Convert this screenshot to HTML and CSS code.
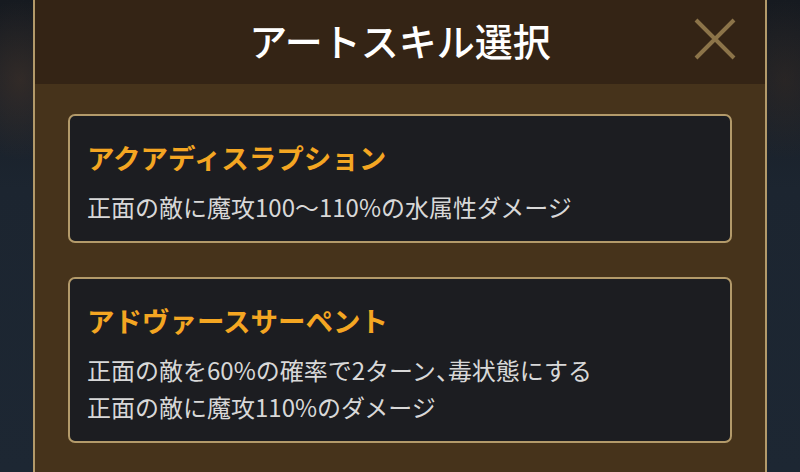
FILE: index.html
```html
<!DOCTYPE html>
<html lang="ja">
<head>
<meta charset="utf-8">
<link rel="stylesheet" href="styles.css">
</head>
<body>
<div class="backdrop">
  <div class="modal">
    <div class="header">
      <h1 class="title">アートスキル選択</h1>
      <button class="close" aria-label="閉じる">
        <svg width="44" height="44" viewBox="0 0 44 44"><path d="M3 3 L41 41 M41 3 L3 41" stroke="#8c7449" stroke-width="4" stroke-linecap="butt" fill="none"/></svg>
      </button>
    </div>
    <div class="body">
      <div class="card">
        <div class="card-title">アクアディスラプション</div>
        <div class="card-desc">正面の敵に魔攻100〜110%の水属性ダメージ</div>
      </div>
      <div class="card">
        <div class="card-title">アドヴァースサーペント</div>
        <div class="card-desc">正面の敵を60%の確率で2ターン<span class="punct">、</span>毒状態にする<br>正面の敵に魔攻110%のダメージ</div>
      </div>
    </div>
  </div>
</div>
</body>
</html>
```

FILE: styles.css
```css
* { box-sizing: border-box; }
html, body { margin: 0; padding: 0; }
body {
  width: 800px;
  height: 472px;
  overflow: hidden;
  font-family: "Noto Sans CJK JP", "Noto Sans", sans-serif;
  background: #1b222c;
}
.backdrop {
  height: 472px;
  padding: 0 33px;
  background:
    radial-gradient(ellipse 60px 80px at 20px 80px, rgba(70,52,40,0.55), rgba(0,0,0,0)),
    radial-gradient(ellipse 60px 80px at 785px 80px, rgba(60,45,35,0.45), rgba(0,0,0,0)),
    linear-gradient(180deg, #161a20 0%, #1c2530 40%, #1d2733 100%);
}
.modal {
  height: 100%;
  border-left: 2px solid #b39a6a;
  border-right: 2px solid #b39a6a;
  background: #46331b;
  display: flex;
  flex-direction: column;
}
.header {
  height: 84px;
  background: #342415;
  display: flex;
  align-items: center;
  justify-content: center;
  position: relative;
}
.title {
  margin: 0;
  color: #ffffff;
  font-size: 38px;
  font-weight: 500;
  line-height: 1;
  padding-bottom: 4px;
}
.close {
  position: absolute;
  right: 28px;
  top: 17px;
  width: 44px;
  height: 44px;
  padding: 0;
  border: 0;
  background: transparent;
  display: flex;
}
.body {
  padding: 30px 33px 0;
  display: flex;
  flex-direction: column;
  gap: 34px;
}
.card {
  background: #1c1d21;
  border: 2px solid #b39a6a;
  border-radius: 7px;
  padding: 22px 17px 16px;
  display: flex;
  flex-direction: column;
  gap: 12px;
}
.card-title {
  color: #f4a622;
  font-size: 27.5px;
  font-weight: 700;
  line-height: 38px;
}
.card-desc {
  color: #d8d8d8;
  font-size: 24px;
  font-weight: 400;
  line-height: 37px;
}
.punct {
  font-feature-settings: "halt";
}
```
